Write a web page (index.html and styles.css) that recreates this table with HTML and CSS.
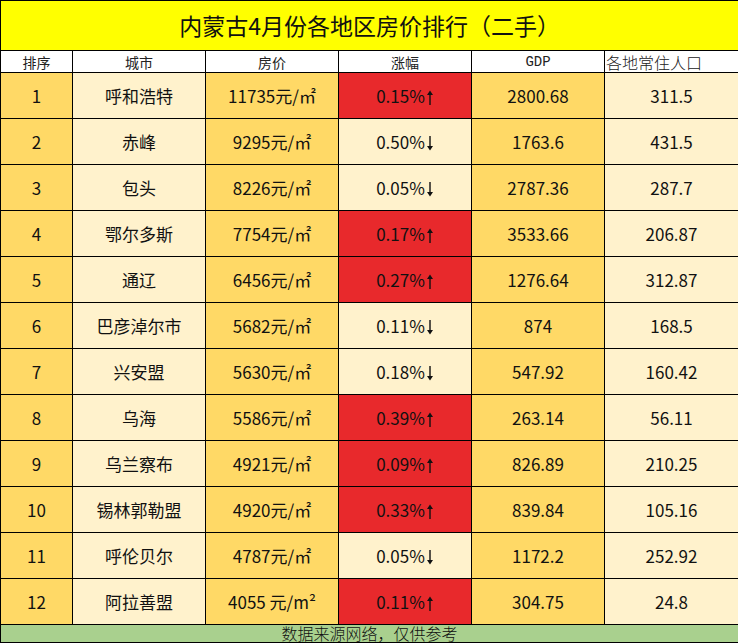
FILE: index.html
```html
<!DOCTYPE html>
<html lang="zh">
<head>
<meta charset="utf-8">
<title>内蒙古4月份各地区房价排行（二手）</title>
<link rel="stylesheet" href="styles.css">
</head>
<body>
<svg class="defs" width="0" height="0" aria-hidden="true">
  <defs>
    <symbol id="up" viewBox="0 0 8 15"><path d="M4 0.5 L1 5 H3.3 V15 H4.7 V5 H7 Z"/></symbol>
    <symbol id="down" viewBox="0 0 8 15"><path d="M4 14.5 L1 10 H3.3 V0 H4.7 V10 H7 Z"/></symbol>
  </defs>
</svg>
<table class="rank">
  <colgroup>
    <col class="c1"><col class="c2"><col class="c3"><col class="c4"><col class="c5"><col class="c6">
  </colgroup>
  <thead>
    <tr class="title-row"><th colspan="6" class="title">内蒙古4月份各地区房价排行（二手）</th></tr>
    <tr class="head-row">
      <th>排序</th><th>城市</th><th>房价</th><th>涨幅</th><th class="gdp">GDP</th><th class="pop">各地常住人口</th>
    </tr>
  </thead>
  <tbody>
    <tr><td class="gold">1</td><td class="light">呼和浩特</td><td class="gold">11735元/㎡</td><td class="red">0.15%<svg class="arr"><use href="#up"/></svg></td><td class="gold">2800.68</td><td class="light">311.5</td></tr>
    <tr><td class="gold">2</td><td class="light">赤峰</td><td class="gold">9295元/㎡</td><td class="light">0.50%<svg class="arr"><use href="#down"/></svg></td><td class="gold">1763.6</td><td class="light">431.5</td></tr>
    <tr><td class="gold">3</td><td class="light">包头</td><td class="gold">8226元/㎡</td><td class="light">0.05%<svg class="arr"><use href="#down"/></svg></td><td class="gold">2787.36</td><td class="light">287.7</td></tr>
    <tr><td class="gold">4</td><td class="light">鄂尔多斯</td><td class="gold">7754元/㎡</td><td class="red">0.17%<svg class="arr"><use href="#up"/></svg></td><td class="gold">3533.66</td><td class="light">206.87</td></tr>
    <tr><td class="gold">5</td><td class="light">通辽</td><td class="gold">6456元/㎡</td><td class="red">0.27%<svg class="arr"><use href="#up"/></svg></td><td class="gold">1276.64</td><td class="light">312.87</td></tr>
    <tr><td class="gold">6</td><td class="light">巴彦淖尔市</td><td class="gold">5682元/㎡</td><td class="light">0.11%<svg class="arr"><use href="#down"/></svg></td><td class="gold">874</td><td class="light">168.5</td></tr>
    <tr><td class="gold">7</td><td class="light">兴安盟</td><td class="gold">5630元/㎡</td><td class="light">0.18%<svg class="arr"><use href="#down"/></svg></td><td class="gold">547.92</td><td class="light">160.42</td></tr>
    <tr><td class="gold">8</td><td class="light">乌海</td><td class="gold">5586元/㎡</td><td class="red">0.39%<svg class="arr"><use href="#up"/></svg></td><td class="gold">263.14</td><td class="light">56.11</td></tr>
    <tr><td class="gold">9</td><td class="light">乌兰察布</td><td class="gold">4921元/㎡</td><td class="red">0.09%<svg class="arr"><use href="#up"/></svg></td><td class="gold">826.89</td><td class="light">210.25</td></tr>
    <tr><td class="gold">10</td><td class="light">锡林郭勒盟</td><td class="gold">4920元/㎡</td><td class="red">0.33%<svg class="arr"><use href="#up"/></svg></td><td class="gold">839.84</td><td class="light">105.16</td></tr>
    <tr><td class="gold">11</td><td class="light">呼伦贝尔</td><td class="gold">4787元/㎡</td><td class="light">0.05%<svg class="arr"><use href="#down"/></svg></td><td class="gold">1172.2</td><td class="light">252.92</td></tr>
    <tr><td class="gold">12</td><td class="light">阿拉善盟</td><td class="gold">4055 元/m²</td><td class="red">0.11%<svg class="arr"><use href="#up"/></svg></td><td class="gold">304.75</td><td class="light">24.8</td></tr>
  </tbody>
  <tfoot>
    <tr class="foot-row"><td colspan="6" class="foot">数据来源网络，仅供参考</td></tr>
  </tfoot>
</table>
</body>
</html>
```

FILE: styles.css
```css
html, body {
  margin: 0;
  padding: 0;
  background: #ffffff;
  overflow: hidden;
}

.defs {
  position: absolute;
  width: 0;
  height: 0;
}

.rank {
  border-collapse: collapse;
  table-layout: fixed;
  width: 738px;
  font-family: "Noto Sans CJK SC", "Noto Sans", sans-serif;
  color: #111;
}

.c1 { width: 72px; }
.c2, .c3, .c4, .c5 { width: 133px; }
.c6 { width: 134px; }

.rank th,
.rank td {
  border: 1px solid #000;
  padding: 0;
  text-align: center;
  vertical-align: middle;
  white-space: nowrap;
  line-height: 1;
}

.title-row th {
  height: 49px;
  background: #ffff00;
  font-size: 23px;
  font-weight: 400;
}

.head-row th {
  height: 21px;
  background: #ffffff;
  font-size: 14px;
  font-weight: 400;
  color: #222;
}

.head-row .gdp {
  font-family: "Liberation Mono", "DejaVu Sans Mono", monospace;
  font-size: 14px;
}

.head-row .pop {
  text-align: left;
  font-size: 16px;
  font-weight: 300;
  padding-left: 1px;
  overflow: hidden;
}

tbody td {
  height: 45px;
  font-size: 17px;
}

.arr {
  width: 8px;
  height: 15px;
  fill: #111;
  vertical-align: -2px;
  margin-left: 1px;
}

.gold { background: #ffd966; }
.light { background: #fff2cc; }
.red { background: #e8292c; }

.foot-row td {
  height: 17px;
  background: #a9d08e;
  font-size: 16px;
  font-weight: 300;
  line-height: 17px;
}
```
